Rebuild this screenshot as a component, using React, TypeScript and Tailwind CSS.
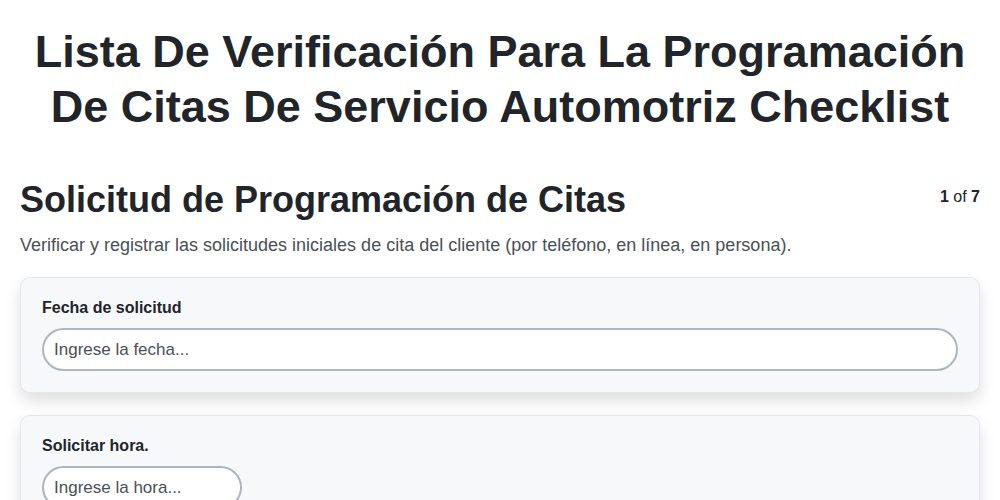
const fields = [
  { label: "Fecha de solicitud", placeholder: "Ingrese la fecha...", wide: true },
  { label: "Solicitar hora.", placeholder: "Ingrese la hora...", wide: false },
];

export default function App() {
  return (
    <div className="min-h-screen bg-white font-['Liberation_Sans',Arial,sans-serif] text-[#212529]">
      <h1 className="px-5 pt-[24px] text-center text-[45px] font-bold leading-[55px]">
        Lista De Verificación Para La Programación De Citas De Servicio Automotriz Checklist
      </h1>
      <main className="px-5 pt-[44px]">
        <div className="flex items-start justify-between">
          <h2 className="text-[36px] font-bold leading-[44px]">Solicitud de Programación de Citas</h2>
          <div className="pt-[7px] text-base">
            <span className="font-bold">1</span> of <span className="font-bold">7</span>
          </div>
        </div>
        <p className="mt-[9px] text-lg leading-7 text-[#495057]">
          Verificar y registrar las solicitudes iniciales de cita del cliente (por teléfono, en línea, en persona).
        </p>
        <div className="mt-[18px] flex flex-col gap-[22px]">
          {fields.map((f) => (
            <div
              key={f.label}
              className="rounded-[10px] border border-[#e4e7ee] bg-[#f7f8fa] px-[21px] pt-[20px] pb-[21px] shadow-[0_8px_16px_rgba(0,0,0,0.13)]"
            >
              <label className="block text-base font-bold leading-5">{f.label}</label>
              <input
                className={`mt-[10px] h-[43px] rounded-full border-2 border-[#adb5bd] bg-white px-[10px] text-[17px] text-[#212529] placeholder:text-[#495057] outline-none ${f.wide ? "w-full" : "w-[200px]"}`}
                placeholder={f.placeholder}
              />
            </div>
          ))}
        </div>
      </main>
    </div>
  );
}
